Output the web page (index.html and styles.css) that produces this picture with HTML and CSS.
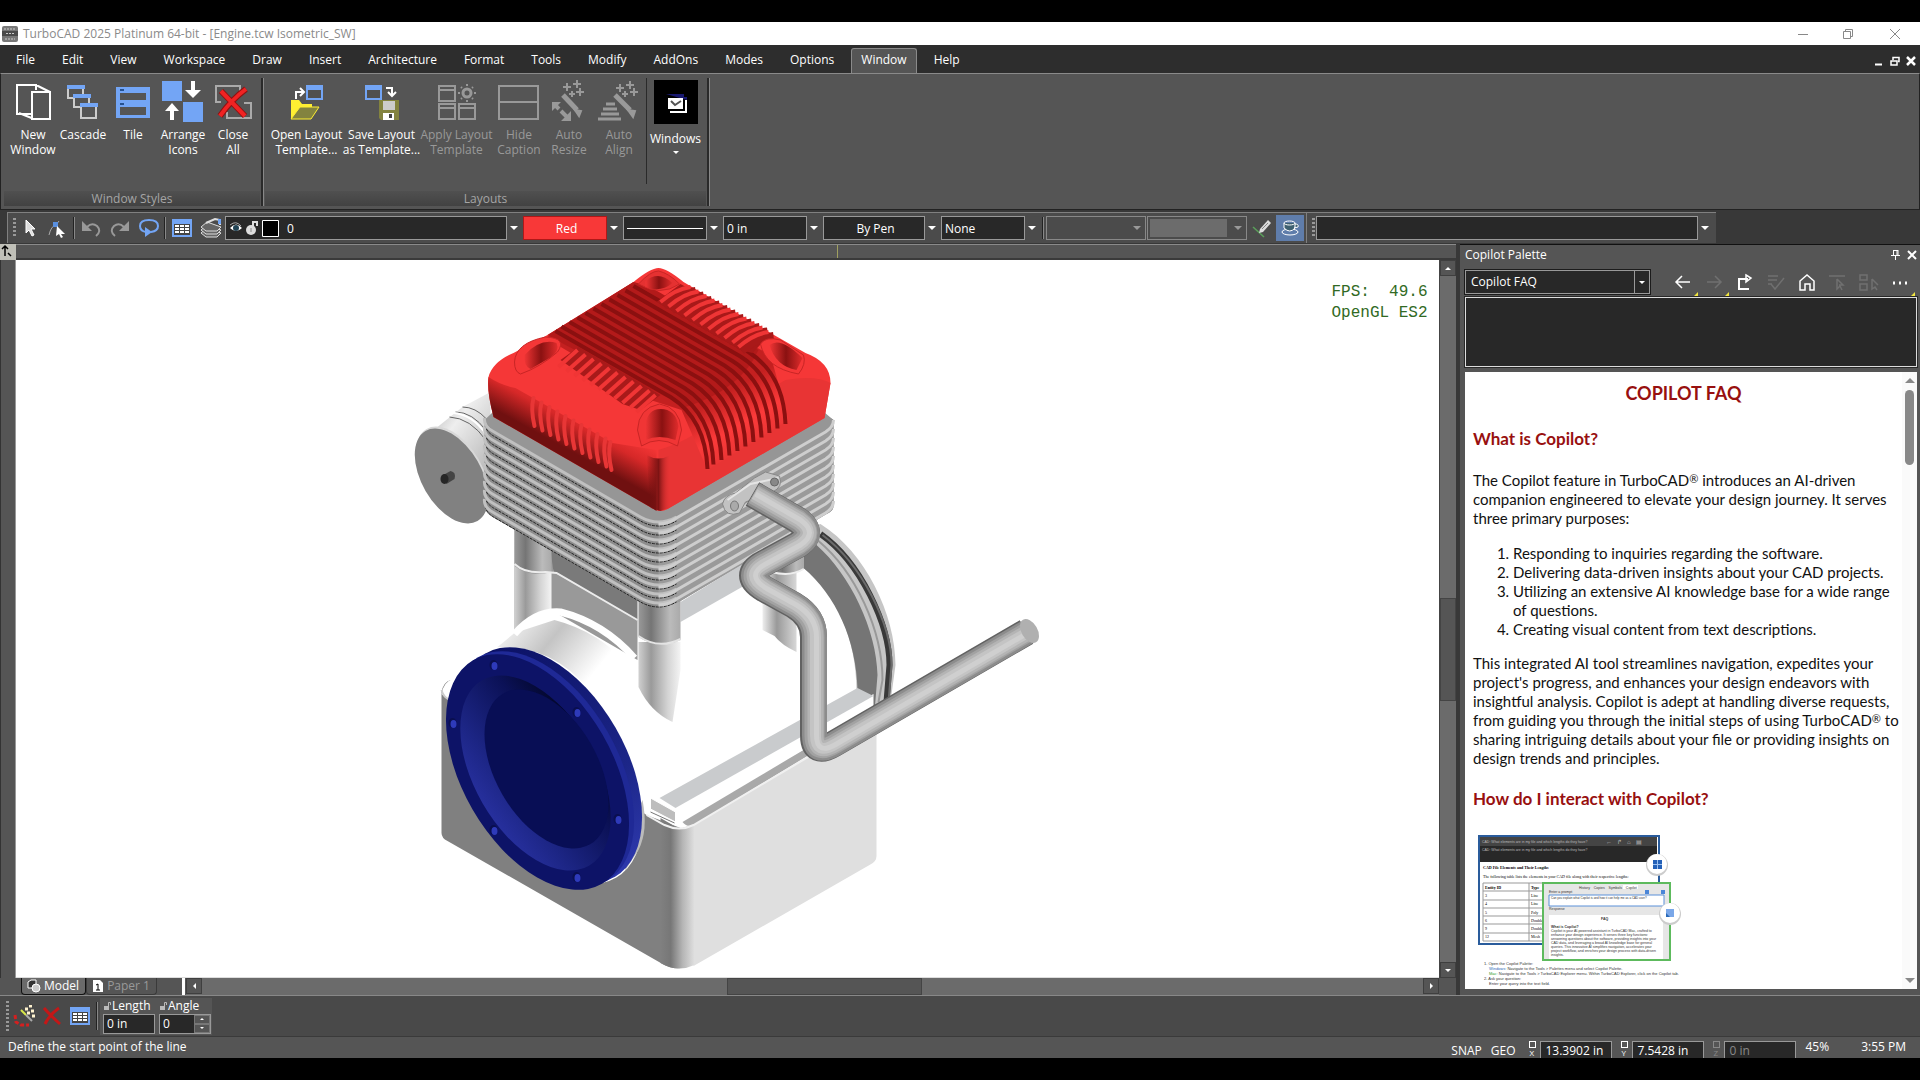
FILE: index.html
```
<!DOCTYPE html>
<html lang="en">
  <head>
    <meta charset="UTF-8" />
    <meta name="viewport" content="width=device-width, initial-scale=1.0" />
    <title>TurboCAD 2025 Platinum 64-bit</title>
    <link rel="stylesheet" href="styles.css">
  </head>
  <body>
    <header class="titlebar">
      <svg class="app-icon" width="16" height="16" viewBox="0 0 16 16">
        <rect width="16" height="16" rx="2" fill="#777" />
        <rect y="5" width="16" height="5" fill="#4a4a4a" />
        <path d="M2 3h12M4 7.500h8M3 13h10" stroke="#ccc" stroke-dasharray="2 1" />
      </svg>
      <h1>TurboCAD 2025 Platinum 64-bit - [Engine.tcw Isometric_SW]</h1>
      <div class="window-buttons">
        <button aria-label="Minimize"><svg width="12" height="12"><path d="M1 6.500h10" /></svg></button>
        <button aria-label="Restore"><svg width="12" height="12"><path d="M1.500 3.500h7v7h-7zM3.500 3v-1.500h7v7h-2" /></svg></button>
        <button aria-label="Close"><svg width="12" height="12"><path d="M1 1l10 10M11 1L1 11" /></svg></button>
      </div>
    </header>

    <nav class="menu">
      <a href="#">File</a>
      <a href="#">Edit</a>
      <a href="#">View</a>
      <a href="#">Workspace</a>
      <a href="#">Draw</a>
      <a href="#">Insert</a>
      <a href="#">Architecture</a>
      <a href="#">Format</a>
      <a href="#">Tools</a>
      <a href="#">Modify</a>
      <a href="#">AddOns</a>
      <a href="#">Modes</a>
      <a href="#">Options</a>
      <a href="#" class="active">Window</a>
      <a href="#">Help</a>
      <div class="doc-buttons">
        <button aria-label="Minimize document"><svg width="10" height="10"><path d="M1 8.500h7" stroke-width="2" /></svg></button>
        <button aria-label="Restore document"><svg width="10" height="10"><path d="M1 5h6v4h-6zM3 4v-2.500h6v4h-1" stroke-width="1.500" /></svg></button>
        <button aria-label="Close document"><svg width="10" height="10"><path d="M1 1l8 8M9 1l-8 8" stroke-width="2.500" /></svg></button>
      </div>
    </nav>

    <section class="ribbon">
      <div class="panel">
        <div class="panel-buttons">
          <button class="tool">
            <svg width="40" height="40" viewBox="0 0 40 40" fill="none" stroke="#fff" stroke-width="2">
              <path d="M20 32H4V3h19v5M23 3l14 7M6 31l15 6" />
              <rect x="19" y="10" width="18" height="27" fill="#555" />
            </svg>
            <span>New<br>Window</span>
          </button>
          <button class="tool">
            <svg width="40" height="40" viewBox="0 0 40 40" fill="none" stroke="#ccc" stroke-width="2">
              <path d="M5 7v9h15V7" />
              <rect x="4" y="3" width="18" height="4" fill="#73a5f5" stroke="none" />
              <path d="M11 16v9h15v-9" fill="#555" />
              <rect x="10" y="12" width="18" height="4" fill="#73a5f5" stroke="none" />
              <path d="M18 25v11h15V25" fill="#555" />
              <rect x="17" y="21" width="18" height="4" fill="#73a5f5" stroke="none" />
            </svg>
            <span>Cascade</span>
          </button>
          <button class="tool">
            <svg width="40" height="40" viewBox="0 0 40 40">
              <rect x="3" y="5" width="34" height="31" fill="#73a5f5" />
              <path d="M7 11h26v7H7zM7 25h26v8H7z" fill="#555" />
              <path d="M7 8h4M7 22h4" stroke="#26518f" stroke-width="2" />
            </svg>
            <span>Tile</span>
          </button>
          <button class="tool">
            <svg width="42" height="42" viewBox="0 0 42 42">
              <path d="M0 0h20v20H0zM21 21h20v20H21z" fill="#73a5f5" />
              <path d="M29 0h4v9h6l-8 8-8-8h6zM8 39h4v-9h5l-7-8-7 8h5z" fill="#fff" />
            </svg>
            <span>Arrange<br>Icons</span>
          </button>
          <button class="tool">
            <svg width="40" height="40" viewBox="0 0 40 40" fill="none" stroke="#aaa" stroke-width="2">
              <path d="M8 20H3V4h24v6M31 21h7v15H14v-6" />
              <path d="M8 9l24 25M33 7Q18 18 7 34" stroke="#8f1111" stroke-width="6" />
              <path d="M8 9l24 25M33 7Q18 18 7 34" stroke="#f02323" stroke-width="4" />
            </svg>
            <span>Close<br>All</span>
          </button>
        </div>
        <div class="panel-title">Window Styles</div>
      </div>

      <div class="panel">
        <div class="panel-buttons">
          <button class="tool wide">
            <svg width="40" height="40" viewBox="0 0 40 40">
              <path d="M19 3h17v15H19z" fill="#73a5f5" />
              <path d="M21 8h13v8H21z" fill="#505050" />
              <path d="M9 17v-7h7M13 6l4 4-4 4" fill="none" stroke="#fff" stroke-width="2" />
              <path d="M4 18h8l3 4h10v5l-17 9H4z" fill="#ffef32" />
              <path d="M13 25h19l-8 12H4z" fill="#83833f" stroke="#ffef32" />
            </svg>
            <span>Open Layout<br>Template...</span>
          </button>
          <button class="tool wide">
            <svg width="40" height="40" viewBox="0 0 40 40">
              <path d="M3 3h17v15H3z" fill="#73a5f5" />
              <path d="M5 8h13v8H5z" fill="#505050" />
              <path d="M24 6h6v7M26 10l4 4 4-4" fill="none" stroke="#fff" stroke-width="2" />
              <path d="M17 18h20v20H19l-2-2z" fill="#83833f" />
              <path d="M21 19h12v9H21z" fill="#ccc" />
              <path d="M21 31h11v7H21z" fill="#fff" />
              <path d="M27 32h3v4h-3z" fill="#444" />
            </svg>
            <span>Save Layout<br>as Template...</span>
          </button>
          <button class="tool wide" disabled>
            <svg width="40" height="40" viewBox="0 0 40 40" fill="none" stroke="#999" stroke-width="2">
              <path d="M2 4h16v15H2zM2 22h16v15H2zM22 22h16v15H22zM2 8h16M2 26h16M22 26h16" />
              <circle cx="30" cy="11" r="4" stroke-width="3" />
              <path d="M30 2v2M30 18v2M21 11h2M37 11h2M24 5l1 1M35 16l1 1M36 5l-1 1M25 16l-1 1" />
            </svg>
            <span>Apply Layout<br>Template</span>
          </button>
          <button class="tool" disabled>
            <svg width="42" height="40" viewBox="0 0 42 40" fill="none" stroke="#999" stroke-width="2">
              <path d="M1 4h39v33H1zM1 20h39" />
            </svg>
            <span>Hide<br>Caption</span>
          </button>
          <button class="tool" disabled>
            <svg width="40" height="44" viewBox="0 0 40 44" fill="none" stroke="#999" stroke-width="2">
              <path d="M14 15l14 15" stroke-width="5" /><path d="M26 30l6 1-2 5z" fill="#999" />
              <path d="M14 7h8M18 3v8M24 4h8M28 0v8M27 12h8M31 8v8M20 14h6M23 11v6" />
              <path d="M6 25l4 4M12 31l6 6" stroke-width="4" />
              <path d="M3 31v-9h9zM12 41h10V31z" fill="#999" stroke="none" />
            </svg>
            <span>Auto<br>Resize</span>
          </button>
          <button class="tool" disabled>
            <svg width="42" height="44" viewBox="0 0 42 44" fill="none" stroke="#999" stroke-width="2">
              <path d="M17 15l15 15" stroke-width="5" /><path d="M30 30l7 1-2 6z" fill="#999" />
              <path d="M18 8h8M22 4v8M28 5h8M32 1v8M32 12h8M36 8v8M24 14h6M27 11v6" />
              <path d="M8 24h9M5 29h14M3 34h18M0 39h23" stroke-width="3" />
            </svg>
            <span>Auto<br>Align</span>
          </button>
          <button class="tool windows">
            <svg width="44" height="44" viewBox="0 0 44 44">
              <rect width="44" height="44" />
              <path d="M12 14h18v3h3v3" fill="#191970" />
              <path d="M14 18h15v11H14zM31 20h2v13H16v-2h15z" fill="#fff" />
              <path d="M17 21l4 4 6-4" fill="none" stroke="#555" stroke-width="2" />
            </svg>
            <span>Windows</span>
            <i class="arrow"></i>
          </button>
        </div>
        <div class="panel-title">Layouts</div>
      </div>
    </section>

    <section class="toolbar">
      <div class="bar">
        <i class="grip"></i>
        <button class="icon" aria-label="Select">
          <svg width="20" height="20" viewBox="0 0 20 20"><path d="M6 2l9 9H11l3 6-2 1-3-6-3 3z" fill="#ddd" stroke="#fff" /></svg>
        </button>
        <button class="icon" aria-label="Edit node">
          <svg width="20" height="20" viewBox="0 0 20 20"><path d="M1 17Q3 8 8 7l3-4" fill="none" stroke="#aaa" /><path d="M5 4h5v5H5z" fill="#5a90e0" /><path d="M9 8l8 8h-4l2 3-2 1-2-4-3 2z" fill="#fff" /></svg>
        </button>
        <i class="sep"></i>
        <button class="icon wider" aria-label="Undo">
          <svg width="20" height="20" viewBox="0 0 20 20" fill="none" stroke="#999" stroke-width="2"><path d="M6 9q5-5 10-1 5 5-1 10" /><path d="M1 3v10h10z" fill="#999" stroke="none" /></svg>
        </button>
        <button class="icon wider" aria-label="Redo">
          <svg width="20" height="20" viewBox="0 0 20 20" fill="none" stroke="#999" stroke-width="2"><path d="M14 9q-5-5-10-1-5 5 1 10" /><path d="M19 3v10H9z" fill="#999" stroke="none" /></svg>
        </button>
        <button class="icon wider" aria-label="Repeat">
          <svg width="20" height="20" viewBox="0 0 20 20" fill="none" stroke="#73a5f5" stroke-width="2"><path d="M7 14Q1 13 1 8q0-6 9-6t9 6q0 5-7 6" /><path d="M6 9l7 5-7 5z" fill="#73a5f5" stroke="none" /></svg>
        </button>
        <i class="sep"></i>
        <button class="icon wider" aria-label="Properties">
          <svg width="20" height="20" viewBox="0 0 20 20"><path d="M0 1h20v18H0z" fill="#73a5f5" /><path d="M2 6h16v11H2z" fill="#444" /><path d="M3 8h14M3 11h14M3 14h14" stroke="#fff" stroke-width="2" stroke-dasharray="4 1" /></svg>
        </button>
        <button class="icon wider" aria-label="Layers">
          <svg width="22" height="20" viewBox="0 0 22 20" fill="#666" stroke="#ddd"><path d="M1 15l6-5 14 5-4 4H6z" /><path d="M1 12l6-5 14 5-4 4H6z" /><path d="M1 9l6-5 14 5-4 4H6z" /><path d="M6 5l9-4 5 1v5" fill="none" stroke-width="2" /><path d="M18 1h3v5h-3z" fill="#73a5f5" stroke="none" /></svg>
        </button>
        <div class="combo layer">
          <div class="box">
            <svg width="50" height="18" viewBox="0 0 50 18">
              <path d="M1 9q6-7 12 0-6 6-12 0z" fill="#fff" /><circle cx="7" cy="9" r="3" fill="#245" /><path d="M1 6q6-5 11 1" stroke="#aaa" fill="none" />
              <circle cx="22" cy="11" r="5" fill="#ddd" /><path d="M24 7V3h4v4" stroke="#ddd" stroke-width="2" fill="none" /><path d="M22 9v4" stroke="#888" />
              <path d="M33.500 1.500h16v16h-16z" fill="#000" stroke="#fff" />
            </svg>
            <select aria-label="Layer"><option>0</option></select>
          </div>
          <i class="arrow"></i>
        </div>
        <div class="combo"><select class="red" aria-label="Color"><option>Red</option></select><i class="arrow"></i></div>
        <div class="combo"><button class="line" aria-label="Line style"><i></i></button><i class="arrow"></i></div>
        <div class="combo"><select aria-label="Line width"><option>0 in</option></select><i class="arrow"></i></div>
        <div class="combo pen"><select class="centered" aria-label="Pen"><option>By Pen</option></select><i class="arrow"></i></div>
        <div class="combo"><select aria-label="Brush"><option>None</option></select><i class="arrow"></i></div>
        <i class="sep"></i>
        <div class="combo off"><select disabled aria-label="Brush color"><option></option></select><i class="arrow"></i></div>
        <div class="combo off filled"><select disabled aria-label="Brush pattern"><option></option></select><i class="arrow"></i></div>
        <button class="icon wider" aria-label="Pick format">
          <svg width="20" height="20" viewBox="0 0 20 20"><path d="M1 9l11 10" stroke="#5aa05a" stroke-width="1.500" /><path d="M8 11l8-9 3 3-8 9-4 1z" fill="#ddd" /><path d="M10 11l6-6" stroke="#888" /></svg>
        </button>
        <button class="icon cup" aria-label="Render">
          <svg width="20" height="20" viewBox="0 0 20 20" fill="none" stroke="#fff"><ellipse cx="10" cy="14" rx="8" ry="3" /><path d="M4 5v5q6 6 11 0V5M15 6q4 0 3 3l-4 1" fill="#3e6070" /><ellipse cx="9.500" cy="5" rx="5.500" ry="2" /></svg>
        </button>
      </div>
      <div class="bar">
        <i class="grip"></i>
        <div class="combo search"><select aria-label="View"><option></option></select><i class="arrow"></i></div>
      </div>
    </section>

    <main>
      <section class="workspace">
        <div class="ruler-corner"><svg width="14" height="14" viewBox="0 0 14 14"><path d="M5 12V2M2 5l3-3 3 3M8 9l3 3" stroke="#000" fill="none" stroke-width="1.500" /></svg></div>
        <div class="ruler-top"><i></i></div>
        <div class="ruler-left"></div>
        <div class="canvas">
          <svg viewBox="16 260 1422 717" role="img" aria-label="Engine model">
            <defs>
              <linearGradient id="corner"><stop offset="0" stop-color="#808080" /><stop offset=".3" stop-color="#777" /><stop offset=".65" stop-color="#b5b5b5" /><stop offset="1" stop-color="#dfdfdf" /></linearGradient>
              <linearGradient id="column"><stop offset="0" stop-color="#999" /><stop offset=".3" stop-color="#757575" /><stop offset=".75" stop-color="#bbb" /><stop offset="1" stop-color="#aaa" /></linearGradient>
              <linearGradient id="leg"><stop offset="0" stop-color="#d0d0d0" /><stop offset=".3" stop-color="#9a9a9a" /><stop offset=".7" stop-color="#d4d4d4" /><stop offset="1" stop-color="#f4f4f4" /></linearGradient>
              <linearGradient id="legFar"><stop offset="0" stop-color="#eee" /><stop offset=".35" stop-color="#999" /><stop offset="1" stop-color="#eee" /></linearGradient>
              <linearGradient id="bore" x1="0" y1="0" x2="1" y2=".5"><stop offset="0" stop-color="#fff" /><stop offset=".4" stop-color="#c4c4c4" /><stop offset=".8" stop-color="#fff" /></linearGradient>
              <linearGradient id="pulley" x1="0" y1="0" x2=".6" y2="1"><stop offset="0" stop-color="#aaa" /><stop offset=".35" stop-color="#eee" /><stop offset="1" stop-color="#aaa" /></linearGradient>
              <linearGradient id="cone" x1=".3" y1="0" x2=".5" y2="1"><stop offset="0" stop-color="#020627" /><stop offset=".3" stop-color="#0b1156" /><stop offset=".75" stop-color="#1c2584" /><stop offset="1" stop-color="#262f9c" /></linearGradient>
              <linearGradient id="rim"><stop offset="0" stop-color="#0c1266" /><stop offset=".65" stop-color="#1c2688" /><stop offset="1" stop-color="#2d38ac" /></linearGradient>
              <linearGradient id="coverLeft" gradientUnits="userSpaceOnUse" x1="590" y1="410" x2="568" y2="450"><stop offset="0" stop-color="#f83838" /><stop offset=".45" stop-color="#d62828" /><stop offset="1" stop-color="#701010" /></linearGradient>
              <linearGradient id="coverRight" gradientUnits="userSpaceOnUse" x1="730" y1="390" x2="765" y2="450"><stop offset="0" stop-color="#c42020" /><stop offset=".5" stop-color="#fb3a3a" /><stop offset="1" stop-color="#e33333" /></linearGradient>
              <linearGradient id="well"><stop offset="0" stop-color="#f03535" /><stop offset=".5" stop-color="#8a1111" /><stop offset="1" stop-color="#e02c2c" /></linearGradient>
              <linearGradient id="coverEdge"><stop offset="0" stop-color="#6e1010" stop-opacity="0" /><stop offset=".5" stop-color="#7c1313" /><stop offset="1" stop-color="#e43434" stop-opacity="0" /></linearGradient>
              <g id="fin" fill="none">
                <path d="M485 425Q485 431 493 436L640 521Q658 531 676 521" stroke="#222" stroke-dasharray="3 1" />
                <path d="M484 418Q483 426 492 431L640 517Q658 527 676 517" stroke="#c0c0c0" stroke-width="3" />
                <path d="M658 524Q668 524 676 518L825 432Q833 427 833 420" stroke="#cecece" stroke-width="3" />
              </g>
              <path id="groove" d="M633 286L748 352Q783 374 785 424" fill="none" stroke="#8b1010" stroke-width="4" />
              <path id="slit" d="M533 398Q530 409 534 426" fill="none" stroke="#e83636" stroke-width="4" stroke-linecap="round" />
              <path id="bumpLeft" d="M558 367L577 350" fill="none" stroke="#f03535" stroke-width="4" />
              <g id="bumpRight" fill="none">
                <path d="M663 306Q678 293 695 291" stroke="#a91919" stroke-width="8" />
                <path d="M660 302Q675 289 690 287" stroke="#ef3535" stroke-width="4" />
              </g>
              <path id="pipe" d="M752 494L797 520Q815 533 797 545L764 563Q740 575 764 589L793 605Q813 617 813 637L813 735Q813 756 833 744L1026 632" fill="none" stroke-linejoin="round" />
              <g id="bolt"><ellipse rx="4" ry="5" fill="#0a0f50" /><ellipse cx="1" cy="1" rx="3" ry="4" fill="#2e3aba" /></g>
            </defs>

            <!-- flywheel -->
            <path d="M820 524C865 552 895 615 895 665L890 702L870 712V697L856 690C856 640 835 590 803 568V530z" fill="#c6c6c6" />
            <path d="M803 545H816C850 575 876 630 877 675L874 712L857 690C856 640 835 595 803 568z" fill="#757575" />
            <path d="M818 541C855 572 882 630 882 680L878 702" stroke="#999" stroke-width="2" fill="none" />
            <path d="M820 534C860 562 889 625 889 665L886 702" stroke="#393939" stroke-width="6" fill="none" />
            <path d="M822 535C862 565 891 625 891 665L888 702" stroke="#6b6b6b" stroke-width="2" fill="none" />

            <!-- base -->
            <path d="M441 692Q443 682 450 680L646 815L680 828V968Q670 969 662 964L447 841Q441 838 441 833z" fill="#808080" />
            <path d="M693 825L807 757L876 716V856Q876 862 869 865L693 966z" fill="#dfdfdf" />
            <path d="M660 818L679 829L694 824V965Q677 973 660 963z" fill="url(#corner)" />
            <path d="M441 694Q443 682 452 679L466 690L450 702z" fill="#fff" />
            <path d="M441 690Q443 698 450 700" fill="none" stroke="#ccc" stroke-width="2" />
            <path d="M682 822L850 722L858 725L693 825Q687 828 682 822z" fill="#a9a9a9" />
            <path d="M646 815L664 825Q679 832 693 825L860 726" fill="none" stroke="#f0f0f0" stroke-width="2" />
            <path d="M675 807L873 694V710L675 822z" fill="#fff" />
            <path d="M659 798L857 688L873 696L675 808z" fill="#c9cbcd" />
            <path d="M650 798L675 812V822L650 809z" fill="#bdbdbd" stroke="#fff" />
            <path d="M650 812L674 823" stroke="#777" />

            <!-- crankcase -->
            <path d="M514 530H553V572L637 620V660L554 612Q530 608 514 632z" fill="#999" />
            <path d="M550 550L637 600V620L553 572z" fill="#7a7a7a" />
            <path d="M514 525H551V572Q530 578 514 564z" fill="url(#column)" />
            <path d="M514 566Q530 578 551 572V611Q530 615 514 634z" fill="url(#leg)" />
            <path d="M514 564Q525 574 545 572L556 573L637 620" fill="none" stroke="#ececec" stroke-width="2" />
            <path d="M497 647L514 633L554 620Q600 632 629 667L637 690L600 705Q560 645 497 647z" fill="url(#bore)" />
            <path d="M514 634Q535 610 560 612Q603 623 634 658" fill="none" stroke="#fff" stroke-width="7" />
            <path d="M680 602L745 562V585L680 622z" fill="#c9cbcd" />
            <path d="M762 568H803V570H796V652Q781 645 774 636L762 630z" fill="url(#legFar)" />
            <path d="M773 555H803V569Q790 576 773 571z" fill="url(#column)" />
            <path d="M771 572Q790 577 803 569" fill="none" stroke="#eee" stroke-width="2" />
            <path d="M638 642H680V670L672 722Q650 712 638 687z" fill="url(#leg)" />
            <path d="M638 598H680V640Q658 650 638 637z" fill="url(#column)" />
            <path d="M638 636Q658 650 680 639" fill="none" stroke="#e4e4e4" stroke-width="2" />

            <!-- pulley -->
            <path d="M432 431L462 407L490 392V507L466 523z" fill="url(#pulley)" />
            <path d="M455 412Q472 412 486 431M462 407Q475 407 486 419M449 417Q470 418 486 441" fill="none" stroke="#666" />
            <path d="M452 413Q472 414 486 435" fill="none" stroke="#fff" stroke-width="2" />
            <ellipse cx="452" cy="474" rx="52" ry="30" transform="rotate(60 452 474)" fill="#d8d8d8" />
            <ellipse cx="451" cy="476" rx="52" ry="30" transform="rotate(60 451 476)" fill="#818181" />
            <path d="M441 476L450 471Q456 472 454 479L446 484z" fill="#444" />
            <ellipse cx="444" cy="479" rx="4" ry="5" fill="#262626" />

            <!-- cylinder fins -->
            <path d="M484 420L658 320L833 420V506Q833 511 826 514L680 601Q658 611 638 601L492 517Q484 512 484 506z" fill="#8c8c8c" />
            <path d="M658 320L833 420V506Q833 511 826 514L680 601Q668 607 658 606z" fill="#9a9a9a" />
            <path d="M484 420L500 405L658 505L815 405L833 420Q832 426 825 430L676 516Q658 526 640 516L492 430z" fill="#969696" />
            <use href="#fin" /><use href="#fin" y="9" /><use href="#fin" y="18" /><use href="#fin" y="27" /><use href="#fin" y="36" />
            <use href="#fin" y="45" /><use href="#fin" y="54" /><use href="#fin" y="63" /><use href="#fin" y="72" /><use href="#fin" y="81" />

            <!-- head cover -->
            <path d="M658 268Q666 268 683 282L770 333L805 353Q830 362 830 383L824 418L667 509Q660 513 653 509L493 417Q486 390 488 377Q492 362 513 353L547 335L633 282Q650 268 658 268z" fill="#f53737" />
            <path d="M488 377Q500 385 515 388L612 443L656 450V511L653 509L493 417Q486 390 488 377z" fill="url(#coverLeft)" />
            <path d="M830 383L824 418L667 509L658 511V450Q690 440 706 425L785 380Q815 375 830 383z" fill="#e83434" />
            <path d="M633 282L643 286L770 355L788 420L707 470L681 410L650 400L545 338z" fill="url(#coverRight)" />
            <path d="M633 282L648 286L758 350Q740 390 685 407L565 345L547 335z" fill="#b31a1a" />
            <use href="#groove" /><use href="#groove" x="-8" y="4.500" /><use href="#groove" x="-16" y="9" /><use href="#groove" x="-24" y="13.500" />
            <use href="#groove" x="-32" y="18" /><use href="#groove" x="-40" y="22.500" /><use href="#groove" x="-48" y="27" /><use href="#groove" x="-56" y="31.500" />
            <use href="#groove" x="-64" y="36" /><use href="#groove" x="-72" y="40.500" /><use href="#groove" x="-78" y="45" />
            <path d="M656 302L680 284L770 334L752 353L740 350z" fill="#a91919" />
            <use href="#bumpRight" /><use href="#bumpRight" x="8" y="4.500" /><use href="#bumpRight" x="16" y="9" /><use href="#bumpRight" x="24" y="13.500" />
            <use href="#bumpRight" x="32" y="18" /><use href="#bumpRight" x="40" y="22.500" /><use href="#bumpRight" x="48" y="27" /><use href="#bumpRight" x="56" y="31.500" />
            <use href="#bumpRight" x="64" y="36" /><use href="#bumpRight" x="72" y="40.500" /><use href="#bumpRight" x="78" y="45" />
            <path d="M560 360L578 347L660 395L640 410L622 404z" fill="#a81a1a" />
            <use href="#bumpLeft" /><use href="#bumpLeft" x="8" y="4.500" /><use href="#bumpLeft" x="16" y="9" /><use href="#bumpLeft" x="24" y="13.500" />
            <use href="#bumpLeft" x="32" y="18" /><use href="#bumpLeft" x="40" y="22.500" /><use href="#bumpLeft" x="48" y="27" /><use href="#bumpLeft" x="56" y="31.500" />
            <use href="#bumpLeft" x="64" y="36" /><use href="#bumpLeft" x="72" y="40.500" /><use href="#bumpLeft" x="78" y="45" />
            <use href="#slit" /><use href="#slit" x="8" y="4.500" /><use href="#slit" x="16" y="9" /><use href="#slit" x="24" y="13.500" />
            <use href="#slit" x="32" y="18" /><use href="#slit" x="40" y="22.500" /><use href="#slit" x="48" y="27" /><use href="#slit" x="56" y="31.500" />
            <use href="#slit" x="64" y="36" /><use href="#slit" x="72" y="40.500" /><use href="#slit" x="77" y="44" />
            <path d="M646 455Q658 462 670 455V507L660 511L650 508z" fill="url(#coverEdge)" />
            <g stroke="#c92525">
              <path d="M638 284Q650 271 658 271Q668 273 679 284Q660 297 638 284z" fill="#e53131" />
              <path d="M645 281Q658 270 672 283Q660 293 645 287z" fill="url(#well)" stroke="none" />
              <path d="M514 362Q515 343 545 337Q567 338 557 352Q540 367 520 374Q514 372 514 362z" fill="#f53737" />
              <path d="M524 355Q540 338 556 343Q560 351 549 358L530 369Q523 366 524 355z" fill="url(#well)" stroke="none" />
              <path d="M760 344Q765 336 780 340L803 355Q806 364 798 374Q765 368 760 344z" fill="#f53737" />
              <path d="M769 345Q780 336 802 358L796 370Q775 366 769 345z" fill="url(#well)" stroke="none" />
              <path d="M637 430Q638 408 659 404Q679 407 681 430L677 446Q658 435 641 446z" fill="#f03535" />
              <path d="M645 425Q647 409 660 409Q675 409 678 426L675 440Q658 434 645 440z" fill="url(#well)" stroke="none" />
            </g>

            <!-- blue end plate -->
            <ellipse cx="551" cy="766" rx="129" ry="75" transform="rotate(60 551 766)" fill="#fff" />
            <path d="M642 800Q648 830 638 850L625 870L620 850z" fill="#bbb" />
            <ellipse cx="550" cy="765" rx="129" ry="75" transform="rotate(60 550 765)" fill="url(#rim)" />
            <ellipse cx="542" cy="769" rx="129" ry="75" transform="rotate(60 542 769)" fill="#1f2996" />
            <ellipse cx="537" cy="772" rx="129" ry="75" transform="rotate(60 537 772)" fill="#0d1367" />
            <ellipse cx="535" cy="773" rx="107" ry="61" transform="rotate(60 535 773)" fill="url(#cone)" />
            <ellipse cx="546" cy="769" rx="87" ry="51" transform="rotate(60 546 769)" fill="#080e55" />
            <use href="#bolt" x="493" y="665" /><use href="#bolt" x="576" y="712" /><use href="#bolt" x="452" y="723" />
            <use href="#bolt" x="493" y="830" /><use href="#bolt" x="617" y="819" /><use href="#bolt" x="576" y="877" />

            <!-- exhaust pipe -->
            <path d="M722 504Q724 495 735 493L754 478L765 472L779 476Q783 487 772 492L745 502L739 513Q725 518 722 504z" fill="#c2c2c2" stroke="#888" />
            <path d="M727 500L750 484L778 478" fill="none" stroke="#e4e4e4" stroke-width="2" />
            <ellipse cx="734" cy="506" rx="4" ry="5" fill="#aaa" stroke="#777" />
            <ellipse cx="774" cy="482" rx="4" ry="4" fill="#888" stroke="#666" />
            <use href="#pipe" stroke="#626262" stroke-width="27" />
            <use href="#pipe" stroke="#8c8c8c" stroke-width="25" x="1" />
            <use href="#pipe" stroke="#a2a2a2" stroke-width="20" x="1" />
            <use href="#pipe" stroke="#b4b4b4" stroke-width="16" x="2" />
            <use href="#pipe" stroke="#c4c4c4" stroke-width="11" x="2" />
            <use href="#pipe" stroke="#cfcfcf" stroke-width="5" x="3" />
            <ellipse cx="1029" cy="631" rx="8" ry="13" transform="rotate(-30 1029 631)" fill="#b0b0b0" />

            <g class="fps" fill="#316a24">
              <text x="1331" y="296" xml:space="preserve">FPS:  49.6</text>
              <text x="1331" y="317">OpenGL ES2</text>
            </g>
          </svg>
        </div>
        <div class="scroll-v">
          <button aria-label="Scroll up"><i class="tri up"></i></button>
          <div class="track"><i></i></div>
          <button aria-label="Scroll down"><i class="tri down"></i></button>
        </div>
        <div class="sheets">
          <div class="sheet-tabs">
            <button class="active">
              <svg width="14" height="14" viewBox="0 0 14 14" stroke="#fff"><path d="M1 3l3-2h5v5l-2 3H1z" fill="#333" /><circle cx="9" cy="9" r="4" fill="#ccc" /></svg>Model
            </button>
            <button>
              <svg width="12" height="14" viewBox="0 0 12 14"><path d="M1 1h7l3 3v9H1z" fill="#fff" /><path d="M4 6l2-1v6M4 11h4" stroke="#000" fill="none" /></svg>Paper 1
            </button>
          </div>
          <div class="scroll-h">
            <button aria-label="Scroll left"><i class="tri left"></i></button>
            <div class="track"><i></i></div>
            <button aria-label="Scroll right"><i class="tri right"></i></button>
          </div>
        </div>
      </section>

      <aside class="palette">
        <div class="palette-title">
          <h2>Copilot Palette</h2>
          <button aria-label="Pin"><svg width="10" height="12" fill="none" stroke="#fff"><path d="M2.500 1v5M2 1.500h5M6 1v5M7 1v5M0 6.500h9M4.500 7v4" /></svg></button>
          <button aria-label="Close palette"><svg width="10" height="10" fill="none" stroke="#fff" stroke-width="2"><path d="M1 1l8 8M9 1L1 9" /></svg></button>
        </div>
        <div class="palette-tools">
          <div class="faq-select">
            <select aria-label="Topic"><option>Copilot FAQ</option></select>
            <i class="arrow"></i>
          </div>
          <div class="palette-icons">
            <button class="more" aria-label="Back"><svg width="18" height="18"><path d="M2 9h14M8 3L2 9l6 6" /></svg></button>
            <button class="more dim" aria-label="Forward"><svg width="18" height="18"><path d="M2 9h14M10 3l6 6-6 6" /></svg></button>
            <button aria-label="Send"><svg width="18" height="18"><path d="M13 16H3V6h9" stroke-width="2" /><path d="M10 2l5 3-5 4z" /></svg></button>
            <button class="dim" aria-label="Check"><svg width="18" height="18"><path d="M1 3h10M1 7h9M1 11h4M4 11l4 5L17 5" /></svg></button>
            <button aria-label="Home"><svg width="18" height="18"><path d="M2 8l7-6 7 6v9h-4v-6H7v6H2z" /></svg></button>
            <button class="dim" aria-label="Pick"><svg width="18" height="18"><path d="M0 3h16M8 6v10l3-3 2 4M8 6l6 6h-4" /></svg></button>
            <button class="dim" aria-label="Pick list"><svg width="20" height="18"><path d="M1 2h7v5H1zM1 11h7v6H1zM13 6v10l3-2 2 3M13 6l6 6" /></svg></button>
            <button class="more" aria-label="More"><svg width="18" height="18"><path d="M2 10h2M8 10h2M14 10h2" stroke-width="3" /></svg></button>
          </div>
        </div>
        <textarea aria-label="Prompt"></textarea>
        <div class="answer">
          <article>
            <h3 class="center">COPILOT FAQ</h3>
            <h3>What is Copilot?</h3>
            <p>The Copilot feature in TurboCAD<sup>®</sup> introduces an AI-driven companion engineered to elevate your design journey. It serves three primary purposes:</p>
            <ol>
              <li>Responding to inquiries regarding the software.</li>
              <li>Delivering data-driven insights about your CAD projects.</li>
              <li>Utilizing an extensive AI knowledge base for a wide range of questions.</li>
              <li>Creating visual content from text descriptions.</li>
            </ol>
            <p>This integrated AI tool streamlines navigation, expedites your project's progress, and enhances your design endeavors with insightful analysis. Copilot is adept at handling diverse requests, from guiding you through the initial steps of using TurboCAD<sup>®</sup> to sharing intriguing details about your file or providing insights on design trends and principles.</p>
            <h3>How do I interact with Copilot?</h3>
            <svg class="guide" width="210" height="153" viewBox="0 0 210 153">
              <path d="M1 1h180v108H1z" fill="#fff" stroke="#2a5c9c" stroke-width="2" />
              <path d="M2 2h177v25H2z" fill="#282828" />
              <path d="M2 2h177v9H2z" fill="#444" />
              <g fill="#bbb" font-size="3.500">
                <text x="4" y="8">CAD: What elements are in my file and which lengths do they have?</text>
                <text x="4" y="16">CAD: What elements are in my file and which lengths do they have?</text>
                <text x="128" y="9" font-size="6" xml:space="preserve">←   ↱   ⌂   ▤</text>
              </g>
              <g class="doc" font-size="4">
                <text x="5" y="34" font-weight="bold">CAD File Elements and Their Lengths</text>
                <text x="5" y="43">The following table lists the elements in your CAD file along with their respective lengths:</text>
                <text x="7" y="54" font-weight="bold">Entity ID</text><text x="53" y="54" font-weight="bold">Type</text>
                <text x="7" y="62">3</text><text x="53" y="62">Line</text>
                <text x="7" y="70">4</text><text x="53" y="70">Line</text>
                <text x="7" y="79">5</text><text x="53" y="79">Poly</text>
                <text x="7" y="87">6</text><text x="53" y="87">Double</text>
                <text x="7" y="95">9</text><text x="53" y="95">Double</text>
                <text x="7" y="103">12</text><text x="53" y="103">Mesh</text>
              </g>
              <path d="M5 48h60M5 56h60M5 65h60M5 73h60M5 81h60M5 89h60M5 98h60M5 106h60M5 48v58M51 48v58" stroke="#999" fill="none" />
              <path d="M65 48h127v77H65z" fill="#e6e6e6" stroke="#5dba5d" stroke-width="2" />
              <path d="M71 60h115v11H71z" fill="#fff" stroke="#5a90d8" />
              <path d="M145 50h15v4h-15zM71 80h114v44H71z" fill="#fff" />
              <path d="M167 55h4v4h-4zM183 55h4v4h-4z" fill="#4a86d8" />
              <g font-size="3.500" fill="#333">
                <text x="101" y="54" xml:space="preserve">History    Copies    Symbols    Copilot</text>
                <text x="71" y="58">Enter a prompt</text>
                <text x="73" y="64" font-size="3">Can you explain what Copilot is and how it can help me as a CAD user?</text>
                <text x="71" y="75">Response</text>
                <text x="123" y="85" font-weight="bold">FAQ</text>
                <text x="73" y="93" font-weight="bold">What is Copilot?</text>
                <text x="73" y="97">Copilot is your AI-powered assistant in TurboCAD Mac, crafted to</text>
                <text x="73" y="101">enhance your design experience. It serves three key functions:</text>
                <text x="73" y="105">answering questions about the software, providing insights into your</text>
                <text x="73" y="109">CAD data, and leveraging a broad AI knowledge base for general</text>
                <text x="73" y="113">queries. This innovative AI simplifies navigation, accelerates your</text>
                <text x="73" y="117">project workflow, and enriches your design process with data-driven</text>
                <text x="73" y="121">insights.</text>
              </g>
              <g font-size="4" fill="#333">
                <text x="6" y="130">1. Open the Copilot Palette:</text>
                <text x="11" y="135"><tspan fill="#2a6ab8">Windows:</tspan> Navigate to the Tools &gt; Palettes menu and select Copilot Palette.</text>
                <text x="11" y="140"><tspan fill="#2a9a2a">Mac:</tspan> Navigate to the Tools &gt; TurboCAD Explorer menu. Within TurboCAD Explorer, click on the Copilot tab.</text>
                <text x="6" y="145">2. Ask your question:</text>
                <text x="11" y="150">Enter your query into the text field.</text>
              </g>
              <circle cx="179" cy="30" r="11" fill="#ccc" /><circle cx="179" cy="29" r="10" fill="#fff" />
              <path d="M175 25h9v9h-9z" fill="#2461b8" /><path d="M179.500 25v9M175 29.500h9" stroke="#9bc0f0" />
              <circle cx="192" cy="79" r="11" fill="#ccc" /><circle cx="192" cy="78" r="10" fill="#fff" />
              <path d="M188 74h8v8h-8z" fill="#7aa7e8" /><path d="M188 78l4 4h-4z" fill="#2a6ab8" />
            </svg>
          </article>
          <div class="answer-scroll"><i class="tri up"></i><b></b><i class="tri down"></i></div>
        </div>
      </aside>
    </main>

    <section class="inspector">
      <i class="grip"></i>
      <button class="icon" aria-label="Local menu">
        <svg width="22" height="22" viewBox="0 0 22 22"><path d="M2 10l1 7 5 3 8 0" stroke="#d32020" stroke-width="3" stroke-dasharray="4 2" fill="none" /><path d="M8 5l5 5" stroke="#d8e84a" stroke-width="2" /><path d="M13 10l6 6" stroke="#aaa" stroke-width="2" /><path d="M12 4h3M16 1h3M14 8h3M18 6h3M19 11h3" stroke="#fff3cf" stroke-width="3" /></svg>
      </button>
      <button class="icon" aria-label="Cancel">
        <svg width="20" height="20" viewBox="0 0 20 20"><path d="M2 2q6 7 16 16M17 2Q8 8 3 18" stroke="#c41717" stroke-width="3" fill="none" /></svg>
      </button>
      <button class="icon" aria-label="Properties">
        <svg width="20" height="20" viewBox="0 0 20 20"><path d="M0 1h20v18H0z" fill="#73a5f5" /><path d="M2 6h16v11H2z" fill="#444" /><path d="M3 8h14M3 11h14M3 14h14" stroke="#fff" stroke-width="2" stroke-dasharray="4 1" /></svg>
      </button>
      <i class="sep"></i>
      <div class="fields">
        <div class="field">
          <label for="length"><svg width="9" height="10"><path d="M1 5h5v4H1z" fill="#bbb" /><path d="M5.500 5V1.500h2V4" stroke="#bbb" fill="none" /></svg>Length</label>
          <input id="length" type="text" value="0 in">
        </div>
        <div class="field">
          <label for="angle"><svg width="9" height="10"><path d="M1 5h5v4H1z" fill="#bbb" /><path d="M5.500 5V1.500h2V4" stroke="#bbb" fill="none" /></svg>Angle</label>
          <div class="spinner">
            <input id="angle" type="text" value="0">
            <div><button aria-label="Increase"><i class="tri up"></i></button><button aria-label="Decrease"><i class="tri down"></i></button></div>
          </div>
        </div>
      </div>
    </section>

    <footer class="status">
      <span class="hint">Define the start point of the line</span>
      <button>SNAP</button>
      <button>GEO</button>
      <label class="coord"><span><i></i>X</span><input type="text" value="13.3902 in"></label>
      <label class="coord"><span><i></i>Y</span><input type="text" value="7.5428 in"></label>
      <label class="coord dim"><span><i></i>Z</span><input type="text" value="0 in" disabled></label>
      <span class="zoom">45%</span>
      <time>3:55 PM</time>
    </footer>
  </body>
</html>
```
FILE: styles.css
```
* {
  box-sizing: border-box;
}

body {
  display: flex;
  flex-direction: column;
  height: 100vh;
  margin: 0;
  padding: 22px 0;
  background-color: #000;
  color: #fff;
  font-family: "Open Sans", "Noto Sans", sans-serif;
  font-size: 12px;
  line-height: 15px;
}

button,
input,
select,
textarea {
  margin: 0;
  padding: 0;
  border: none;
  border-radius: 0;
  background: none;
  color: inherit;
  font: inherit;
}

select {
  appearance: none;
}

svg {
  display: block;
}

h1,
h2 {
  margin: 0;
  font-size: 12px;
  font-weight: normal;
}

/* Title bar */
.titlebar {
  display: flex;
  align-items: center;
  height: 23px;
  padding-left: 2px;
  background-color: #fff;
}

.titlebar h1 {
  flex: 1;
  margin-left: 5px;
  color: #8a8a8a;
}

.window-buttons {
  display: flex;
}

.window-buttons button {
  display: flex;
  justify-content: center;
  width: 45px;
}

.window-buttons svg {
  fill: none;
  stroke: #888;
}

.window-buttons button:last-child {
  width: 50px;
}

/* Menu */
.menu {
  display: flex;
  gap: 7px;
  height: 28px;
  padding: 3px 4px 0 6px;
  background-color: #2d2d2d;
}

.menu a {
  padding: 4px 10px;
  color: #fff;
  text-decoration: none;
}

.menu .active {
  border: 1px solid #8a8a8a;
  border-bottom: none;
  border-radius: 3px 3px 0 0;
  background-color: #555;
  padding: 3px 9px;
}

.doc-buttons {
  display: flex;
  align-items: center;
  gap: 6px;
  margin-left: auto;
}

.doc-buttons svg {
  fill: none;
  stroke: #fff;
}

/* Ribbon */
.ribbon {
  display: flex;
  height: 137px;
  padding: 4px 2px 3px;
  border: 1px solid #222;
  border-top-color: #8a8a8a;
  background-color: #555;
}

.panel {
  display: flex;
  flex-direction: column;
  justify-content: space-between;
  border-right: 2px solid #2a2a2a;
  margin-right: 1px;
  padding: 0 1px;
  box-shadow: 1px 0 #888;
}

.panel-buttons {
  display: flex;
  padding: 0 2px 0 4px;
}

.tool {
  display: flex;
  flex-direction: column;
  align-items: center;
  width: 50px;
  padding-top: 2px;
}

.tool.wide {
  width: 75px;
}

.tool svg {
  height: 44px;
  margin-bottom: 3px;
}

.tool span {
  white-space: nowrap;
}

.tool:disabled {
  color: #999;
}

.tool.windows {
  width: 58px;
  margin-left: 2px;
  padding: 2px 0 30px;
  border-left: 1px solid #2a2a2a;
}

.windows svg {
  margin-bottom: 7px;
}

.windows .arrow {
  margin-top: 5px;
}

.panel-title {
  background: linear-gradient(#505050, #424242);
  color: #a5a5a5;
  text-align: center;
}

.arrow {
  flex: none;
  border: 4px solid transparent;
  border-top-color: #fff;
  border-bottom: none;
}

.windows .arrow {
  border-width: 3px 3px 0;
}

/* Property toolbar */
.toolbar {
  display: flex;
  height: 34px;
  padding: 2px 0 1px 7px;
  background-color: #383838;
}

.bar {
  display: flex;
  align-items: center;
  padding: 0 2px 0 5px;
  border-top: 1px solid #808080;
  border-left: 1px solid #808080;
  background-color: #4b4b4b;
}

.grip {
  flex: none;
  width: 3px;
  height: 20px;
  background: repeating-linear-gradient(#999 0 2px, transparent 2px 4px);
}

.sep {
  flex: none;
  width: 2px;
  height: 22px;
  margin: 0 1px;
  border-left: 1px solid #222;
  border-right: 1px solid #888;
}

.icon {
  display: flex;
  flex: none;
  justify-content: center;
  width: 28px;
}

.icon.wider {
  width: 29px;
}

.icon.cup {
  padding: 3px 0;
  background-color: #5f7dab;
}

.combo {
  display: flex;
  align-items: center;
  width: 100px;
  height: 24px;
}

.combo .arrow {
  margin: 0 5px 0 3px;
}

.combo select,
.line,
.box {
  flex: 1;
  min-width: 0;
  height: 24px;
  padding-left: 3px;
  border: 1px solid #999;
  background-color: #282828;
}

.box {
  display: flex;
  align-items: center;
  gap: 5px;
}

.combo .box select {
  height: 20px;
  border: none;
}

.combo.layer {
  width: 298px;
}

.combo.pen {
  width: 118px;
}

.combo.search {
  width: 398px;
  margin-left: 1px;
}

.combo .red,
.combo .centered {
  text-align-last: center;
}

.combo .red {
  border-color: #b01818;
  background-color: #f83838;
}

.line i {
  display: block;
  height: 1px;
  margin-right: 3px;
  background-color: #fff;
}

.combo.off {
  margin-left: 1px;
  border: 1px solid #888;
}

.combo.off .arrow {
  margin-right: 4px;
  border-top-color: #999;
}

.combo.off select {
  border: none;
  height: 18px;
  margin-left: 2px;
  background: none;
}

.combo.filled select {
  margin-right: 4px;
  background-color: #7a7a7a;
}

/* Drawing area */
main {
  display: flex;
  flex: 1;
  min-height: 0;
  background-color: #383838;
}

.workspace {
  display: grid;
  flex: 1;
  grid-template-columns: 16px 1fr 17px;
  grid-template-rows: 16px 1fr 17px;
  min-width: 0;
  margin-right: 4px;
  background-color: #555;
}

.ruler-corner {
  background-color: #c0c0b8;
}

.ruler-top {
  grid-column: 2 / 4;
  border-top: 1px solid #8a8a8a;
  border-bottom: 2px solid #3a3a3a;
}

.ruler-top i {
  display: block;
  width: 1px;
  height: 13px;
  margin-left: 57%;
  background-color: #a0a060;
}

.ruler-left {
  border-right: 1px solid #999;
  border-left: 1px solid #333;
}

.canvas {
  min-height: 0;
  background-color: #fff;
  border-bottom: 1px solid #ddd;
}

.canvas svg {
  width: 100%;
  height: 100%;
}

.fps {
  font-family: "Liberation Mono", monospace;
  font-size: 16px;
}

.scroll-v,
.scroll-h {
  display: flex;
  background-color: #6b6b6b;
}

.scroll-v {
  flex-direction: column;
  border-left: 1px solid #444;
}

.scroll-v button,
.scroll-h button {
  display: flex;
  flex: none;
  align-items: center;
  justify-content: center;
  width: 16px;
  height: 16px;
  border: 1px solid #3f3f3f;
  background-color: #555;
}

.track {
  flex: 1;
}

.track i {
  display: block;
  border: 1px solid #444;
  background-color: #555;
}

.scroll-v .track {
  display: flex;
  flex-direction: column;
}

.scroll-v .track::before {
  content: "";
  height: 47%;
}

.scroll-v .track i {
  height: 15%;
}

.scroll-h .track i {
  width: 16%;
  height: 100%;
  margin-left: 43%;
}

.tri {
  border: 3px solid transparent;
}

.tri.up {
  border-top: none;
  border-bottom-color: #fff;
}

.tri.down {
  border-bottom: none;
  border-top-color: #fff;
}

.tri.left {
  border-left: none;
  border-right-color: #fff;
}

.tri.right {
  border-right: none;
  border-left-color: #fff;
}

.sheets {
  display: flex;
  grid-column: 2 / 4;
  padding-right: 17px;
}

.sheet-tabs {
  display: flex;
  width: 169px;
  padding-left: 5px;
  border-right: 3px solid #fff;
}

.sheet-tabs button {
  display: flex;
  align-items: center;
  gap: 3px;
  padding: 0 6px 1px 5px;
  border: 1px solid #3a3a3a;
  border-top: none;
  border-radius: 0 0 4px 4px;
  color: #999;
}

.sheet-tabs .active {
  border-color: #111;
  background-color: #6a6a6a;
  color: #fff;
}

.scroll-h {
  flex: 1;
  margin-left: 1px;
}

/* Copilot palette */
.palette {
  display: flex;
  flex-direction: column;
  width: 460px;
  padding: 0 3px 6px 5px;
  border-top: 1px solid #111;
  background-color: #555;
}

.palette-title {
  display: flex;
  align-items: center;
  gap: 6px;
  height: 19px;
}

.palette-title h2 {
  flex: 1;
}

.palette-tools {
  display: flex;
  align-items: flex-start;
  justify-content: space-between;
  height: 33px;
  padding-top: 6px;
}

.faq-select {
  display: flex;
  align-items: center;
  width: 185px;
  height: 24px;
  border: 1px solid #999;
  outline: 1px solid #1c1c1c;
  background-color: #282828;
}

.faq-select select {
  flex: 1;
  height: 22px;
  padding: 0 0 2px 5px;
  border-right: 1px solid #999;
}

.faq-select .arrow {
  margin: 0 4px;
  border-width: 3px 3px 0;
}

.palette-icons {
  display: flex;
  margin-right: 2px;
}

.palette-icons button {
  position: relative;
  display: flex;
  justify-content: center;
  width: 31px;
  height: 26px;
  padding-top: 3px;
}

.palette-icons svg {
  fill: none;
  stroke: #fff;
  stroke-width: 1.5;
}

.palette-icons .dim svg {
  stroke: #707070;
}

/* corner mark of buttons that open a menu */
.palette-icons .more::after {
  content: "";
  position: absolute;
  right: 0;
  bottom: 0;
  border-bottom: 4px solid #f2e640;
  border-left: 4px solid transparent;
}

.palette textarea {
  height: 70px;
  border: 1px solid #ddd;
  outline: 1px solid #282828;
  background-color: #282828;
  resize: none;
}

.answer {
  display: flex;
  flex: 1;
  min-height: 0;
  margin-top: 5px;
  background-color: #fff;
}

article {
  flex: 1;
  overflow: hidden;
  padding-left: 8px;
  color: #111;
  font-family: Lato, sans-serif;
  font-size: 15px;
  line-height: 19px;
}

article h3 {
  margin: 19px 0 20px;
  color: #981010;
  font-size: 17px;
  line-height: 24px;
}

article .center {
  margin: 9px 8px 22px 0;
  font-size: 18px;
  text-align: center;
}

article p {
  margin: 15px 0;
}

article ol {
  margin: 16px 0 15px;
  padding-left: 40px;
}

article sup {
  font-size: 11px;
  line-height: 0;
  vertical-align: 3px;
}

.guide {
  margin: 24px 0 0 5px;
  font-family: "Liberation Sans", sans-serif;
}

.guide .doc {
  font-family: "Liberation Serif", serif;
}

.answer-scroll {
  display: flex;
  flex-direction: column;
  align-items: center;
  width: 15px;
  padding: 6px 0;
  background-color: #fafafa;
}

.answer-scroll .tri {
  border-width: 5px;
}

.answer-scroll .up {
  border-top: none;
  border-bottom-color: #888;
}

.answer-scroll .down {
  margin-top: auto;
  border-bottom: none;
  border-top-color: #888;
}

.answer-scroll b {
  width: 9px;
  height: 75px;
  margin-top: 7px;
  border-radius: 5px;
  background-color: #888;
}

/* Inspector bar */
.inspector {
  display: flex;
  align-items: center;
  height: 42px;
  padding-left: 6px;
  border-top: 1px solid #888;
  border-bottom: 1px solid #3a3a3a;
  background-color: #494949;
}

.inspector .grip {
  height: 30px;
  margin-right: 1px;
}

.inspector .sep {
  height: 28px;
  margin: 0 2px;
}

.fields {
  display: flex;
  gap: 4px;
  padding: 0 1px 1px 3px;
  background-color: #555;
}

.field {
  width: 52px;
}

.field label {
  display: flex;
  align-items: center;
  height: 16px;
}

.field input {
  width: 100%;
  height: 20px;
  padding-left: 3px;
  border: 1px solid #999;
  background-color: #282828;
}

.spinner {
  display: flex;
  border: 1px solid #999;
}

.spinner input {
  width: 34px;
  height: 18px;
  border: none;
}

.spinner button {
  display: flex;
  align-items: center;
  justify-content: center;
  width: 16px;
  height: 9px;
  border: 1px solid #777;
}

.spinner .tri {
  border-width: 2px;
}

.spinner .up {
  border-top: none;
}

.spinner .down {
  border-bottom: none;
}

/* Status bar */
.status {
  display: flex;
  align-items: flex-end;
  gap: 9px;
  height: 21px;
  overflow: hidden;
  padding: 0 14px 0 8px;
  background-color: #555;
}

.status button {
  white-space: nowrap;
}

.status .hint {
  flex: 1;
  align-self: flex-start;
  padding-top: 2px;
}

.coord {
  display: flex;
  gap: 4px;
  width: 83px;
  height: 17px;
  margin-left: 5px;
}

.coord + .coord {
  margin-left: 0;
}

.coord span {
  width: 7px;
  font-size: 8px;
  line-height: 9px;
}

.coord i {
  display: block;
  width: 7px;
  height: 7px;
  border: 1px solid #fff;
}

.coord input {
  flex: 1;
  min-width: 0;
  padding-left: 4px;
  border: 1px solid #999;
  border-bottom: none;
  background-color: #282828;
}

.coord.dim {
  color: #888;
}

.coord.dim i {
  border-color: #888;
}

.zoom,
time {
  align-self: flex-start;
  padding-top: 2px;
}

time {
  margin-left: 23px;
}
```
